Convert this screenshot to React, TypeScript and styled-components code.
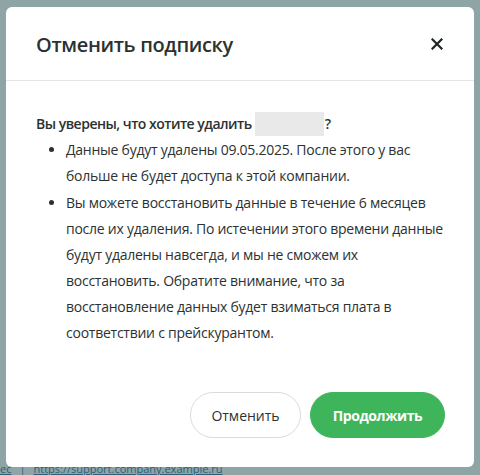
import React from "react";
import styled, { createGlobalStyle } from "styled-components";

const GlobalStyle = createGlobalStyle`
  html, body {
    margin: 0;
    padding: 0;
    background: #8fa5a5;
  }
  body {
    font-family: "Open Sans", "Noto Sans", sans-serif;
  }
`;

const Page = styled.div`
  position: relative;
  width: 480px;
  height: 475px;
  overflow: hidden;
  background: #8fa5a5;
`;

const BackLink = styled.div`
  position: absolute;
  left: 0;
  bottom: 0;
  font-size: 11px;
  line-height: 12px;
  color: #2b5f7a;
  display: flex;
  gap: 8px;
  a {
    color: #2b5f7a;
    text-decoration: underline;
  }
`;

const Overlay = styled.div`
  position: absolute;
  inset: 0;
  padding: 7px 6px 0 6px;
`;

const Modal = styled.div`
  background: #fff;
  border-radius: 6px;
  width: 468px;
  height: 460px;
  display: flex;
  flex-direction: column;
  color: #2b3231;
`;

const Header = styled.div`
  height: 73px;
  display: flex;
  align-items: center;
  justify-content: space-between;
  padding: 0 30px 0 30px;
  border-bottom: 1px solid #e4e6e6;
`;

const Title = styled.h2`
  margin: 0;
  padding-top: 1px;
  font-size: 20px;
  font-weight: 600;
  color: #2b3231;
  letter-spacing: -0.35px;
`;

const Close = styled.button`
  border: 0;
  background: none;
  padding: 0;
  width: 14px;
  height: 14px;
  display: flex;
  align-items: center;
  justify-content: center;
  cursor: pointer;
`;

const Body = styled.div`
  padding: 30px 20px 0 30px;
  flex: 1;
`;

const Question = styled.p`
  margin: 0;
  font-size: 14px;
  font-weight: 600;
  letter-spacing: -0.5px;
  line-height: 26px;
  display: flex;
  align-items: center;
  white-space: pre;
`;

const Blank = styled.span`
  display: inline-block;
  width: 69px;
  height: 24px;
  background: #e9e9e9;
  margin-right: 1px;
`;

const List = styled.ul`
  margin: 0;
  padding: 0 0 0 30px;
  font-size: 14px;
  line-height: 26px;
  letter-spacing: -0.25px;
  color: #2b3231;
  white-space: nowrap;
`;

const Item = styled.li`
  margin-bottom: 1px;
`;

const Footer = styled.div`
  display: flex;
  justify-content: flex-end;
  gap: 9px;
  padding: 0 29px 29px 0;
`;

const Button = styled.button<{ $primary?: boolean }>`
  height: 46px;
  border-radius: 23px;
  font-family: "Open Sans", "Noto Sans", sans-serif;
  font-size: 14px;
  width: ${(p) => (p.$primary ? "135px" : "111px")};
  padding: 0;
  border: 1px solid ${(p) => (p.$primary ? "#3eb55a" : "#d8dcdc")};
  background: ${(p) => (p.$primary ? "#3eb55a" : "#fff")};
  color: ${(p) => (p.$primary ? "#fff" : "#2b3231")};
  font-weight: ${(p) => (p.$primary ? 700 : 400)};
  letter-spacing: ${(p) => (p.$primary ? "-0.4px" : "0")};
  cursor: pointer;
`;

export default function App() {
  return (
    <Page>
      <GlobalStyle />
      <BackLink>
        <a>ес</a>
        <span>|</span>
        <a>https://support.company.example.ru</a>
      </BackLink>
      <Overlay>
        <Modal>
          <Header>
            <Title>Отменить подписку</Title>
            <Close aria-label="Закрыть">
              <svg width="12" height="12" viewBox="0 0 12 12">
                <path
                  d="M1.5 1.5 L10.5 10.5 M10.5 1.5 L1.5 10.5"
                  stroke="#1d2322"
                  strokeWidth="2.2"
                  strokeLinecap="square"
                />
              </svg>
            </Close>
          </Header>
          <Body>
            <Question>
              Вы уверены, что хотите удалить <Blank />?
            </Question>
            <List>
              <Item>
                Данные будут удалены 09.05.2025. После этого у вас
                <br />
                больше не будет доступа к этой компании.
              </Item>
              <Item>
                Вы можете восстановить данные в течение 6 месяцев
                <br />
                после их удаления. По истечении этого времени данные
                <br />
                будут удалены навсегда, и мы не сможем их
                <br />
                восстановить. Обратите внимание, что за
                <br />
                восстановление данных будет взиматься плата в
                <br />
                соответствии с прейскурантом.
              </Item>
            </List>
          </Body>
          <Footer>
            <Button>Отменить</Button>
            <Button $primary>Продолжить</Button>
          </Footer>
        </Modal>
      </Overlay>
    </Page>
  );
}
